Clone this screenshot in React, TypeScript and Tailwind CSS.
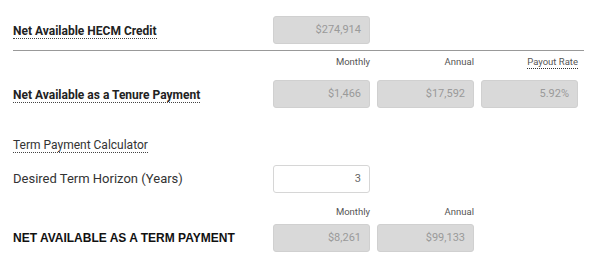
import React from "react";

const Box = ({ value, white }: { value: string; white?: boolean }) => (
  <div
    className={`w-[97px] h-[28px] rounded-[3px] flex items-center justify-end pr-[8px] text-[11px] ${
      white ? "bg-white border border-[#d6d6d6] text-[#666]" : "bg-[#d9d9d9] border border-[#d0d0d0] text-[#9a9a9a]"
    }`}
  >
    {value}
  </div>
);

const Head = ({ text, dotted }: { text: string; dotted?: boolean }) => (
  <div className="w-[97px] flex justify-end">
    <span className={`text-[9.5px] text-[#555] leading-[12px] ${dotted ? "border-b border-dotted border-[#333]" : ""}`}>{text}</span>
  </div>
);

export default function App() {
  return (
    <div className="w-[599px] h-[268px] bg-white font-['Roboto',sans-serif] text-[#222] pt-[16px]">
      <div className="flex items-center pl-[13px]">
        <div className="w-[260px]">
          <span className="text-[12px] font-bold border-b border-dotted border-[#444] leading-[16px]">Net Available HECM Credit</span>
        </div>
        <Box value="$274,914" />
      </div>
      <div className="ml-[13px] w-[571px] h-[1px] bg-[#999] mt-[6px]" />
      <div className="flex pl-[273px] gap-[7px] mt-[5px]">
        <Head text="Monthly" />
        <Head text="Annual" />
        <Head text="Payout Rate" dotted />
      </div>
      <div className="flex items-center pl-[13px] mt-[11px]">
        <div className="w-[260px]">
          <span className="text-[12px] font-bold border-b border-dotted border-[#444] leading-[16px]">Net Available as a Tenure Payment</span>
        </div>
        <div className="flex gap-[7px]">
          <Box value="$1,466" />
          <Box value="$17,592" />
          <Box value="5.92%" />
        </div>
      </div>
      <div className="pl-[13px] mt-[24px]">
        <span className="text-[12px] text-[#333] border-b border-dotted border-[#444] leading-[16px]">Term Payment Calculator</span>
      </div>
      <div className="flex items-center pl-[13px] mt-[9px]">
        <div className="w-[260px] text-[13px] text-[#333]">Desired Term Horizon (Years)</div>
        <Box value="3" white />
      </div>
      <div className="flex pl-[273px] gap-[7px] mt-[13px]">
        <Head text="Monthly" />
        <Head text="Annual" />
      </div>
      <div className="flex items-center pl-[13px] mt-[6px]">
        <div className="w-[260px] font-['Liberation_Sans',sans-serif] text-[12px] font-bold text-[#111]">NET AVAILABLE AS A TERM PAYMENT</div>
        <div className="flex gap-[7px]">
          <Box value="$8,261" />
          <Box value="$99,133" />
        </div>
      </div>
    </div>
  );
}
